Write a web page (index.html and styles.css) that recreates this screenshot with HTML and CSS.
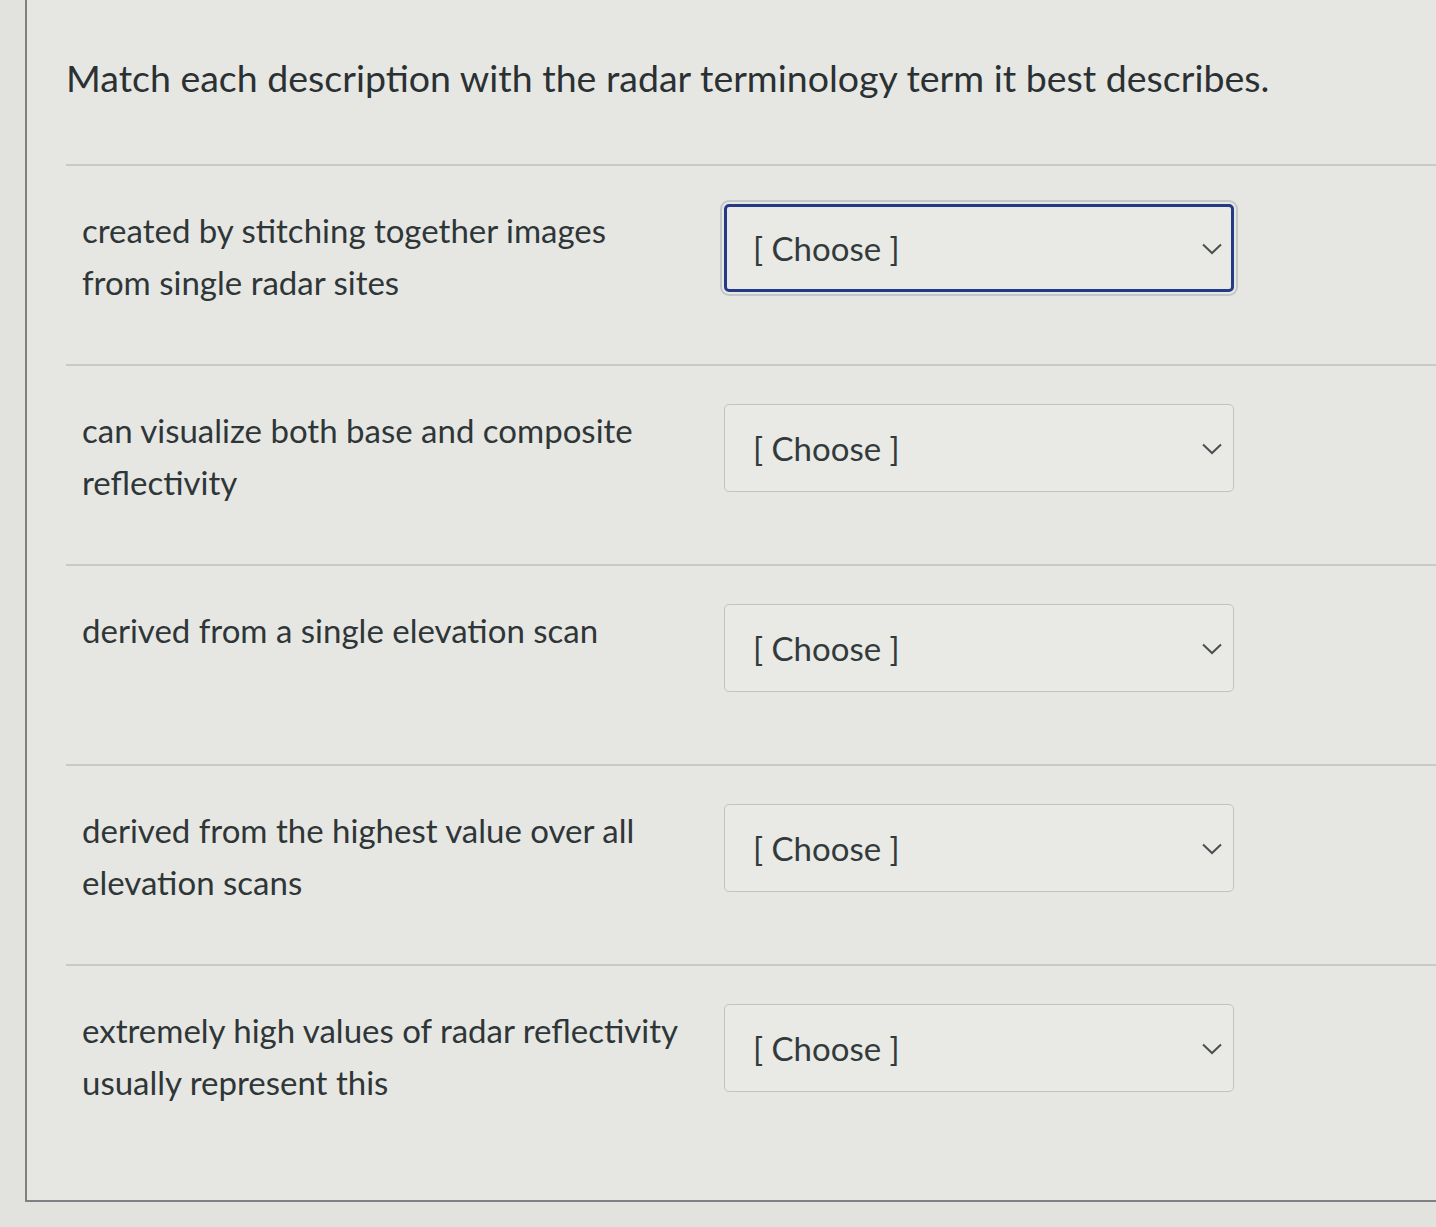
FILE: index.html
```html
<!DOCTYPE html>
<html lang="en">
<head>
    <meta charset="UTF-8">
    <meta name="viewport" content="width=device-width, initial-scale=1.0">
    <title>Matching question</title>
    <link rel="stylesheet" href="styles.css">
</head>
<body>
    <div class="question">
        <h1>Match each description with the radar terminology term it best describes.</h1>

        <!-- answer rows -->
        <div class="match-row">
            <div class="desc"><p>created by stitching together images from single radar sites</p></div>
            <div class="choice focused">
                <select><option>[ Choose ]</option></select>
                <svg class="chev" viewBox="0 0 20 12"><path d="M1 1.5 L10 10 L19 1.5"/></svg>
            </div>
        </div>

        <div class="match-row">
            <div class="desc"><p>can visualize both base and composite reflectivity</p></div>
            <div class="choice">
                <select><option>[ Choose ]</option></select>
                <svg class="chev" viewBox="0 0 20 12"><path d="M1 1.5 L10 10 L19 1.5"/></svg>
            </div>
        </div>

        <div class="match-row">
            <div class="desc"><p>derived from a single elevation scan</p></div>
            <div class="choice">
                <select><option>[ Choose ]</option></select>
                <svg class="chev" viewBox="0 0 20 12"><path d="M1 1.5 L10 10 L19 1.5"/></svg>
            </div>
        </div>

        <div class="match-row">
            <div class="desc"><p>derived from the highest value over all elevation scans</p></div>
            <div class="choice">
                <select><option>[ Choose ]</option></select>
                <svg class="chev" viewBox="0 0 20 12"><path d="M1 1.5 L10 10 L19 1.5"/></svg>
            </div>
        </div>

        <div class="match-row last">
            <div class="desc"><p>extremely high values of radar reflectivity usually represent this</p></div>
            <div class="choice">
                <select><option>[ Choose ]</option></select>
                <svg class="chev" viewBox="0 0 20 12"><path d="M1 1.5 L10 10 L19 1.5"/></svg>
            </div>
        </div>
    </div>
</body>
</html>
```

FILE: styles.css
```css
body {
    margin: 0;
    background-color: #e2e3df;
    font-family: Lato, 'Open Sans', sans-serif;
    color: #2f3638;
    overflow: hidden;
}
.question {
    margin-left: 25px;
    padding-left: 39px;
    background-color: #e6e7e3;
    border-left: 2px solid #7d8184;
    border-bottom: 2px solid #7d8184;
}
h1 {
    margin: 0 0 64px;
    padding-top: 56px;
    font-size: 37.5px;
    line-height: 44px;
    font-weight: 400;
    color: #2b3133;
}
.match-row {
    display: flex;
    height: 200px;
    box-sizing: border-box;
    padding: 38px 0 0 16px;
    border-top: 2px solid #c8cac7;
}
.match-row.last {
    height: 236px;
}
.desc {
    flex: 0 0 642px;
    font-size: 33px;
    line-height: 52px;
}
.desc p {
    margin: 0;
    width: 598px;
}
.choice {
    position: relative;
    width: 510px;
    height: 88px;
}
.choice select {
    appearance: none;
    -webkit-appearance: none;
    width: 100%;
    height: 100%;
    box-sizing: border-box;
    padding: 0 60px 0 28px;
    border: 1px solid #bfc3c5;
    border-radius: 5px;
    background-color: #e9eae6;
    font-family: Lato, 'Open Sans', sans-serif;
    font-size: 33px;
    color: #333a3c;
}
.choice.focused select {
    border: 3px solid #243a86;
    padding-left: 26px;
    box-shadow: 0 0 0 2px #e7e8e4, 0 0 0 4px #c4c7c8;
}
.chev {
    position: absolute;
    right: 12px;
    top: 39px;
    width: 20px;
    height: 12px;
    fill: none;
    stroke: #4a4f52;
    stroke-width: 2;
    pointer-events: none;
}
```
